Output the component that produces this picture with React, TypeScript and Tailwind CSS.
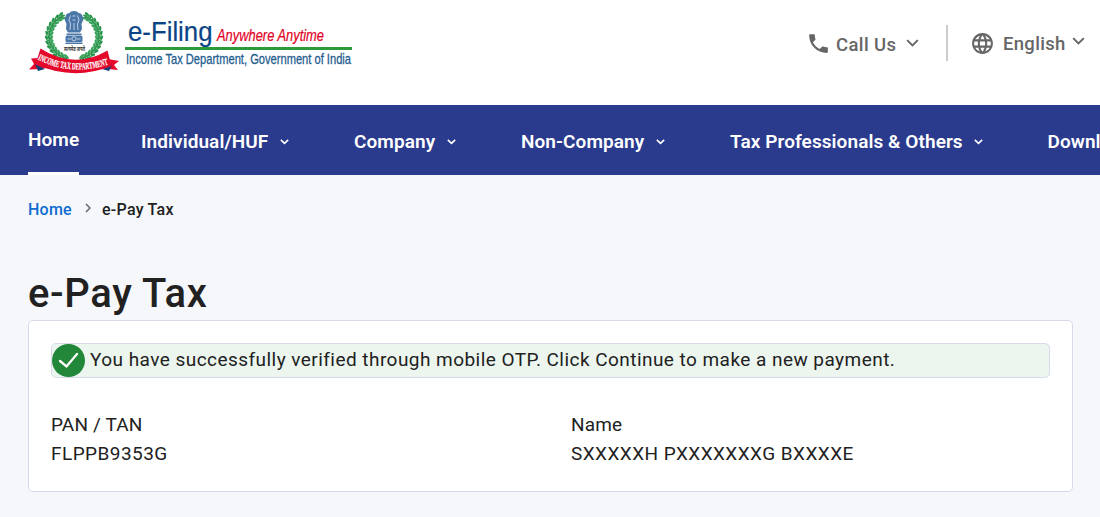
import React from "react";

type ChevronProps = { size: number; className?: string; strokeWidth?: number };

function ChevronDown({ size, className = "", strokeWidth = 2 }: ChevronProps) {
  return (
    <svg width={size} height={size * 0.6} viewBox="0 0 10 6" fill="none" className={className}>
      <path d="M.9 .9 5 4.9 9.1 .9" stroke="currentColor" strokeWidth={strokeWidth} />
    </svg>
  );
}

const leafAngles = [27, 37, 48, 59, 70, 81, 92, 103, 114, 125, 136, 147, 158];

function Wreath() {
  return (
    <g>
      {[-1, 1].map((side) => (
        <g key={side} transform={`translate(46 28.500) scale(${side} .92)`}>
          {leafAngles.map((a) => (
            <g key={a} transform={`rotate(${a}) translate(0 -25)`}>
              <ellipse cx="0" cy="-2.300" rx="3.300" ry="1.500" transform="rotate(28)" fill="#27964b" />
              <ellipse cx="0" cy="2.300" rx="3.300" ry="1.400" transform="rotate(-28)" fill="#3ba45c" />
              <ellipse cx="0" cy="0" rx="2.600" ry="1" fill="#2b914c" />
              <circle cx="2.300" cy="-1" r=".6" fill="#e4f3e8" />
            </g>
          ))}
        </g>
      ))}
    </g>
  );
}

function Emblem() {
  return (
    <g>
      <Wreath />
      <g transform="translate(-.5 1)">
        <g fill="#4a76a8">
          <path d="M38 7q1-3 4-3l1.500-1.500q3-1 6 0l1.500 1.500q3 0 4 3l.7 4-1.700 4 .5 5-2 3.500H40.500l-2-3.500 .5-5-1.700-4z" />
          <path d="M39 24.500h15v1.500H39zM38 33.500h17v1.500H38z" />
          <rect x="38" y="26.500" width="17" height="6.500" rx="1.500" />
        </g>
        <g stroke="#dce7f2" fill="none" strokeWidth=".8">
          <path d="M43 6.500 41.500 11l1.500 4-.5 6M50 6.500 51.500 11 50 15l.5 6M45 7h3M45 11h3M46.500 14v7" />
          <circle cx="46.500" cy="29.700" r="2.100" />
          <path d="M40 30h3.500M49.500 30h3.500" />
        </g>
      </g>
      <text x="36" y="43" fontSize="6" textLength="21" lengthAdjust="spacingAndGlyphs" fontWeight="700" fill="#333" className="font-['Noto_Sans',sans-serif]">
        सत्यमेव जयते
      </text>
      <path d="M1 61.500 6 56 3 50.500 12 50 18 60 12 61z" fill="#e4092b" />
      <path d="M90 62 86 57 91 53 80 51 73 60 80 61z" fill="#e4092b" />
      <path d="m7 56 10 5-7 2zM84 57l-10 4 7 2z" fill="#163f78" />
      <path d="M12.500 40.500Q46 62 79.500 42.500L83.500 58Q46 73 7.500 56.500z" fill="#e4092b" />
      <path id="ribbon-line" d="M9.500 51.500Q44 69 82 56" fill="none" />
      <text fontSize="9.500" fontWeight="700" fill="#fff" stroke="#fff" strokeWidth=".2" className="font-['Liberation_Serif',serif]">
        <textPath href="#ribbon-line" textLength="73" lengthAdjust="spacingAndGlyphs">INCOME TAX DEPARTMENT</textPath>
      </text>
    </g>
  );
}

function Logo() {
  return (
    <svg width="326" height="68" viewBox="0 0 326 68" role="img" aria-label="e-Filing" className="overflow-visible font-['Liberation_Sans',sans-serif]">
      <Emblem />
      <text x="100" y="32.500" fontSize="27" textLength="84.500" lengthAdjust="spacingAndGlyphs" fill="#0b4486" stroke="#0b4486" strokeWidth=".2">e-Filing</text>
      <text x="189" y="32.500" fontSize="16" fontStyle="italic" textLength="107" lengthAdjust="spacingAndGlyphs" fill="#e2001f" stroke="#e2001f" strokeWidth=".2">Anywhere Anytime</text>
      <rect x="97" y="39" width="227" height="3" fill="#2d9a3a" />
      <text x="98" y="56" fontSize="15" textLength="225" lengthAdjust="spacingAndGlyphs" fill="#1f5d8f" stroke="#1f5d8f" strokeWidth=".3">Income Tax Department, Government of India</text>
    </svg>
  );
}

function Header() {
  return (
    <header className="flex h-[105px] items-start justify-between bg-white pl-7 pr-[15px] pt-2">
      <Logo />
      <div className="flex pt-[17px] text-[18.500px] font-medium text-[#666]">
        <div className="flex h-9 items-center">
          <svg width="25" height="25" viewBox="0 0 24 24" fill="currentColor">
            <path d="M6.620 10.790c1.440 2.830 3.760 5.140 6.590 6.590l2.200-2.200c.27-.27.67-.36 1.020-.24 1.120.37 2.330.57 3.570.57.55 0 1 .45 1 1V20c0 .55-.45 1-1 1-9.390 0-17-7.610-17-17 0-.55.45-1 1-1h3.500c.55 0 1 .45 1 1 0 1.250.2 2.450.57 3.570.11.35.03.74-.25 1.020l-2.200 2.200z" />
          </svg>
          <span className="ml-[5px] w-[60px] whitespace-nowrap pt-1.5 tracking-[0.4px]">Call Us</span>
          <ChevronDown size={13} strokeWidth={1.5} className="ml-[10px]" />
        </div>
        <div className="ml-[27px] h-9 w-0.5 bg-[#ccc]" />
        <div className="flex h-9 items-center">
          <svg width="25" height="25" viewBox="0 0 24 24" fill="currentColor" className="ml-[22px]">
            <path d="M11.990 2C6.470 2 2 6.480 2 12s4.470 10 9.990 10C17.520 22 22 17.520 22 12S17.520 2 11.990 2zm6.930 6h-2.950c-.32-1.250-.78-2.450-1.380-3.560 1.840.63 3.370 1.910 4.330 3.560zM12 4.040c.83 1.200 1.480 2.530 1.910 3.960h-3.820c.43-1.430 1.080-2.760 1.910-3.960zM4.260 14C4.100 13.360 4 12.690 4 12s.1-1.360.26-2h3.380c-.08.66-.14 1.320-.14 2s.06 1.340.14 2H4.260zm.82 2h2.950c.32 1.250.78 2.450 1.380 3.560-1.840-.63-3.370-1.900-4.330-3.560zm2.950-8H5.080c.96-1.660 2.490-2.930 4.330-3.560C8.810 5.550 8.350 6.750 8.030 8zM12 19.960c-.83-1.200-1.480-2.530-1.910-3.960h3.820c-.43 1.430-1.080 2.760-1.910 3.960zM14.340 14H9.660c-.09-.66-.16-1.320-.16-2s.07-1.350.16-2h4.680c.09.65.16 1.320.16 2s-.07 1.340-.16 2zm.25 5.560c.6-1.110 1.060-2.310 1.380-3.560h2.950c-.96 1.650-2.490 2.930-4.330 3.560zM16.360 14c.08-.66.14-1.320.14-2s-.06-1.340-.14-2h3.380c.16.64.26 1.310.26 2s-.1 1.360-.26 2h-3.380z" />
          </svg>
          <span className="ml-2 w-[62px] pt-1 tracking-[0.3px]">English</span>
          <ChevronDown size={13} strokeWidth={1.5} className="mb-1 ml-[7px]" />
        </div>
      </div>
    </header>
  );
}

const navItems = [
  { label: "Individual/HUF", width: "w-[213px]", text: "w-[128px]" },
  { label: "Company", width: "w-[167px]", text: "w-[82px]" },
  { label: "Non-Company", width: "w-[209px]", text: "w-[124px]" },
  { label: "Tax Professionals & Others", width: "w-[317.500px]", text: "w-[233px]" },
  { label: "Downloads", width: "w-[170px]", text: "w-[95px]" },
];

function NavBar() {
  return (
    <nav className="flex h-[70px] overflow-hidden whitespace-nowrap bg-[#2a3a8c] pl-7 text-[19px] font-semibold tracking-[0.08px] text-white">
      <a className="mr-[62px] flex w-[51px] shrink-0 items-center border-b-[3px] border-white pt-1">Home</a>
      {navItems.map((item) => (
        <a key={item.label} className={`flex shrink-0 items-center pt-1 ${item.width}`}>
          <span className={item.text}>{item.label}</span>
          <ChevronDown size={9} strokeWidth={1.8} className="ml-[11px]" />
        </a>
      ))}
    </nav>
  );
}

function Field({ label, value }: { label: string; value: string }) {
  return (
    <div className="w-[520px] shrink-0 leading-[29px]">
      <div className="tracking-[0.15px]">{label}</div>
      <div>{value}</div>
    </div>
  );
}

export default function App() {
  return (
    <div className="h-[517px] overflow-hidden bg-[#f5f7fb] font-['Roboto',sans-serif] text-[#212121]">
      <Header />
      <NavBar />
      <main className="px-7 pt-[23px]">
        <div className="flex h-6 items-center text-base font-medium tracking-[0.25px]">
          <a className="w-[45px] text-[#0f6cd1]">Home</a>
          <svg width="6" height="10" viewBox="0 0 6 10" fill="none" className="mb-1 ml-3 mr-[11px]">
            <path d="m1 1 4 4-4 4" stroke="#666" strokeWidth="1.500" />
          </svg>
          <span>e-Pay Tax</span>
        </div>
        <h1 className="mt-12 h-[50px] text-[40px] font-medium leading-[48px] tracking-[0.65px]">e-Pay Tax</h1>
        <section className="h-[172px] w-[1045px] rounded-[5px] border border-[#d8daec] bg-white px-[22px] pt-[22px] text-[19px] tracking-[0.455px]">
          <div className="flex h-[35px] items-center rounded-[5px] border border-[#d8daec] bg-[#ecf6ef]">
            <svg width="33" height="33" viewBox="0 0 33 33" fill="none">
              <circle cx="16.500" cy="16.500" r="16.500" fill="#228738" />
              <path d="m8 17 6.500 5.500L25 10" stroke="#fff" strokeWidth="2.300" strokeLinecap="round" />
            </svg>
            <span className="ml-[5px] whitespace-nowrap pb-0.5 leading-[31px]">You have successfully verified through mobile OTP. Click Continue to make a new payment.</span>
          </div>
          <div className="mt-8 flex">
            <Field label="PAN / TAN" value="FLPPB9353G" />
            <Field label="Name" value="SXXXXXH PXXXXXXXG BXXXXE" />
          </div>
        </section>
      </main>
    </div>
  );
}
